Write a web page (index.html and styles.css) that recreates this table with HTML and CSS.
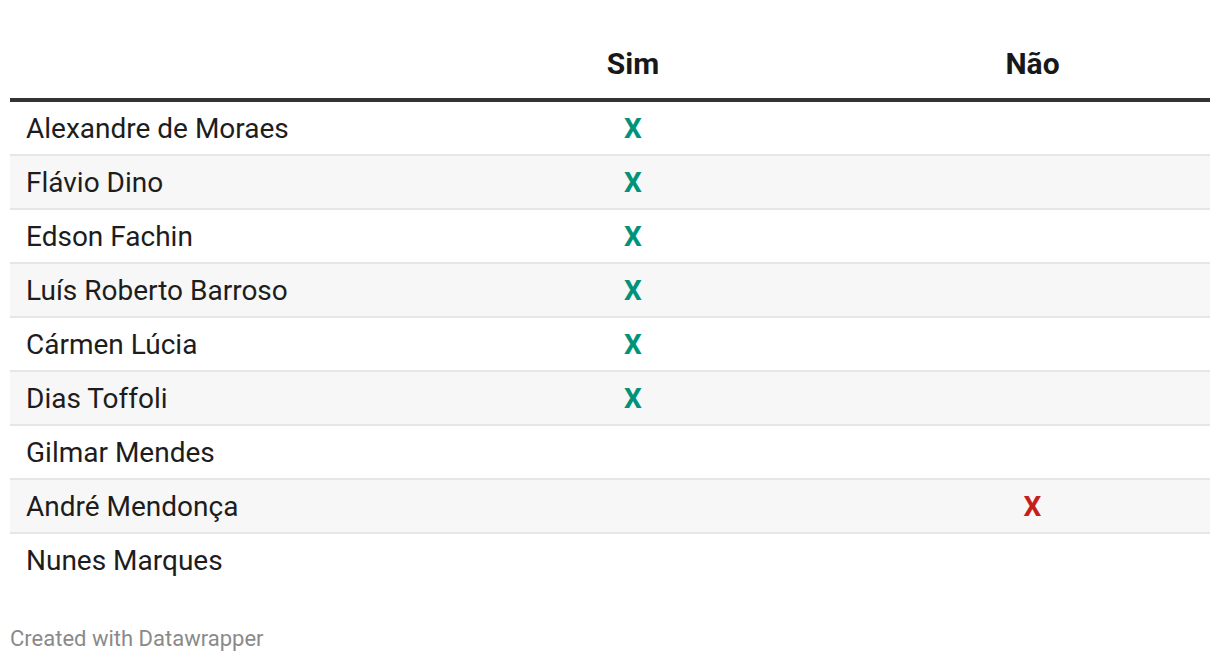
FILE: index.html
```html
<!DOCTYPE html>
<html lang="pt">
<head>
<meta charset="utf-8">
<link rel="stylesheet" href="styles.css">
</head>
<body>
<div class="chart">
  <div class="table">
    <div class="row head">
      <div class="cell name"></div>
      <div class="cell mark">Sim</div>
      <div class="cell mark">Não</div>
    </div>
    <div class="row"><div class="cell name">Alexandre de Moraes</div><div class="cell mark yes">X</div><div class="cell mark"></div></div>
    <div class="row alt"><div class="cell name">Flávio Dino</div><div class="cell mark yes">X</div><div class="cell mark"></div></div>
    <div class="row"><div class="cell name">Edson Fachin</div><div class="cell mark yes">X</div><div class="cell mark"></div></div>
    <div class="row alt"><div class="cell name">Luís Roberto Barroso</div><div class="cell mark yes">X</div><div class="cell mark"></div></div>
    <div class="row"><div class="cell name">Cármen Lúcia</div><div class="cell mark yes">X</div><div class="cell mark"></div></div>
    <div class="row alt"><div class="cell name">Dias Toffoli</div><div class="cell mark yes">X</div><div class="cell mark"></div></div>
    <div class="row"><div class="cell name">Gilmar Mendes</div><div class="cell mark"></div><div class="cell mark"></div></div>
    <div class="row alt"><div class="cell name">André Mendonça</div><div class="cell mark"></div><div class="cell mark no">X</div></div>
    <div class="row last"><div class="cell name">Nunes Marques</div><div class="cell mark"></div><div class="cell mark"></div></div>
  </div>
  <div class="footer">Created with Datawrapper</div>
</div>
</body>
</html>
```
FILE: styles.css
```css
html, body {
  margin: 0;
  padding: 0;
  background: #fff;
}
body {
  font-family: Roboto, "Liberation Sans", sans-serif;
  color: #1d1d1d;
}
.chart {
  padding: 0 10px;
}
.table {
  display: flex;
  flex-direction: column;
}
.row {
  display: grid;
  grid-template-columns: 401px 444px 355px;
  height: 52px;
  align-items: center;
  border-bottom: 2px solid #e6e6e6;
  font-size: 28px;
}
.row.alt {
  background: #f7f7f7;
}
.row.last {
  border-bottom: none;
}
.row.head {
  height: 98px;
  align-items: end;
  border-bottom: 4px solid #333;
  font-size: 30px;
  font-weight: 700;
  color: #181818;
}
.row.head .cell {
  padding-bottom: 17px;
}
.cell.name {
  padding-left: 16px;
}
.cell.mark {
  text-align: center;
}
.yes {
  color: #00937a;
  font-weight: 700;
}
.no {
  color: #c71e1d;
  font-weight: 700;
}
.footer {
  margin-top: 40px;
  font-size: 22px;
  color: #8a8a8a;
}
```
